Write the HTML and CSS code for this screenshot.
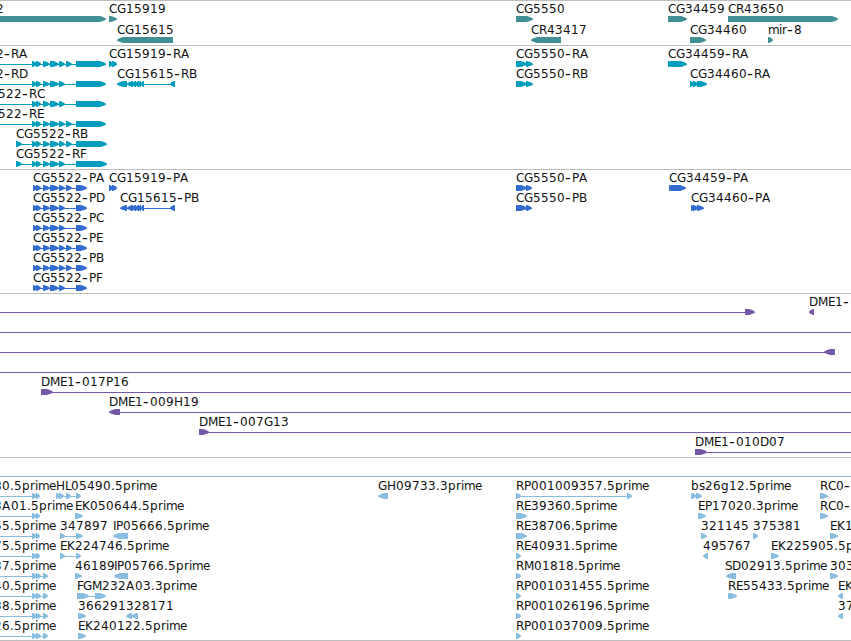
FILE: index.html
```
<!DOCTYPE html>
<html lang="en">
<head>
    <meta charset="UTF-8">
    <meta name="viewport" content="width=device-width, initial-scale=1.0">
    <title>Genome Browser</title>
    <link rel="stylesheet" href="styles.css">
</head>
<body>
    <div class="browser">
        <svg class="track genes" id="genes"></svg>
        <svg class="track transcripts" id="transcripts"></svg>
        <svg class="track proteins" id="proteins"></svg>
        <svg class="track bacs" id="bacs"></svg>
        <svg class="track ests" id="ests"></svg>
    </div>
    <script src="tracks.js"></script>
</body>
</html>
```
FILE: styles.css
```
html, body {
    margin: 0;
    padding: 0;
    background: white;
    overflow: hidden;
}
.browser {
    display: flex;
    flex-direction: column;
    width: 851px;
    height: 641px;
    box-sizing: border-box;
    border-bottom: 1px solid #bebebe;
    overflow: hidden;
}
.track {
    display: block;
    box-sizing: border-box;
    width: 851px;
    flex: none;
    border-top: 1px solid #bebebe;
    overflow: hidden;
}
.track text {
    font-family: "DejaVu Sans", sans-serif;
    font-size: 12px;
    fill: #111;
}
.track .dash {
    font-size: 16px;
}
.track rect {
    shape-rendering: crispEdges;
}
.genes {
    height: 45px;
    fill: #408f94;
}
.transcripts {
    height: 124px;
    fill: #009dbd;
}
.proteins {
    height: 124px;
    fill: #326ccf;
}
.bacs {
    height: 164px;
    fill: #7658a9;
}
.ests {
    height: 183px;
    fill: #88bddf;
}
```
FILE: tracks.js
```
// horizontal advance of each label character, in pixels
const advance = {
    A: 9, C: 8, D: 9, E: 7, F: 6, G: 9, H: 9, I: 3, K: 8, L: 6, M: 10, P: 7, R: 8, S: 7,
    b: 8, e: 8, g: 8, i: 3, m: 11, p: 8, r: 5, s: 6, "-": 7, ".": 4
};

const utr = [[32, 37], [36, 41], [43, 50], [50, 59], [59, 65]];
const cds = [[33, 37], [36, 41], [43, 50], [50, 59], [59, 65]];
const extra = [[66, 72]];
const est2 = [[-9, -4], [32, 37], [36, 40]];
const est3 = [[-9, -4], [32, 37], [36, 41], [43, 48]];

// feature: [label, label x, exons, strand]
const tracks = {
    genes: { first: 18, step: 21, rows: [
        [["2", -4, [[-20, 106]]], ["CG15919", 109, [[109, 117]]], ["CG5550", 516, [[516, 533]]],
         ["CG34459", 668, [[668, 687]]], ["CR43650", 728, [[728, 838]]]],
        [["CG15615", 117, [[117, 173]], -1], ["CR43417", 531, [[531, 561]], -1],
         ["CG34460", 690, [[690, 706]]], ["mir-8", 768, [[768, 773]]]]
    ]},
    transcripts: { first: 18, step: 20, rows: [
        [["2-RA", -4, [[-9, -4], ...utr, ...extra, [76, 106]]], ["CG15919-RA", 109, [[109, 113], [112, 117]]],
         ["CG5550-RA", 516, [[516, 527], [526, 533]]], ["CG34459-RA", 668, [[668, 671], [670, 687]]]],
        [["2-RD", -4, [[-9, -4], ...utr, [76, 106]]],
         ["CG15615-RB", 117, [[117, 127], [127, 133], [132, 136], [135, 139], [138, 141], [141, 144], [170, 175]], -1],
         ["CG5550-RB", 516, [[516, 527], [526, 533]]], ["CG34460-RA", 690, [[690, 694], [693, 698], [697, 707]]]],
        [["522-RC", -2, [[-9, -4], ...utr, [76, 106]]]],
        [["522-RE", -2, [[-9, -4], ...utr, ...extra, [76, 106]]]],
        [["CG5522-RB", 16, [[16, 22], ...utr, ...extra, [76, 107]]]],
        [["CG5522-RF", 16, [[16, 22], ...utr, [76, 107]]]]
    ]},
    proteins: { first: 18, step: 20, rows: [
        [["CG5522-PA", 33, [...cds, ...extra, [76, 87]]], ["CG15919-PA", 109, [[109, 113], [112, 117]]],
         ["CG5550-PA", 516, [[516, 527], [526, 532]]], ["CG34459-PA", 669, [[669, 672], [671, 686]]]],
        [["CG5522-PD", 33, [...cds, [76, 87]]],
         ["CG15615-PB", 120, [[120, 127], [127, 133], [132, 136], [135, 139], [138, 141], [141, 144], [170, 175]], -1],
         ["CG5550-PB", 516, [[516, 527], [526, 532]]], ["CG34460-PA", 691, [[691, 694], [693, 698], [697, 704]]]],
        [["CG5522-PC", 33, [...cds, [76, 87]]]],
        [["CG5522-PE", 33, [...cds, ...extra, [76, 87]]]],
        [["CG5522-PB", 33, [...cds, ...extra, [76, 87]]]],
        [["CG5522-PF", 33, [...cds, [76, 87]]]]
    ]},
    bacs: { first: 18, step: 20, rows: [
        [["", 0, [[-20, -10], [745, 755]]], ["DME1-", 809, [[809, 814]], -1]],
        [["", 0, [[-20, -10], [870, 880]]]],
        [["", 0, [[-20, -10], [824, 835]], -1]],
        [["", 0, [[-20, -10], [870, 880]]]],
        [["DME1-017P16", 41, [[41, 53], [870, 880]]]],
        [["DME1-009H19", 109, [[109, 120], [870, 880]], -1]],
        [["DME1-007G13", 199, [[199, 209], [870, 880]]]],
        [["DME1-010D07", 695, [[695, 707], [870, 880]]]]
    ]},
    ests: { first: 18, step: 20, rows: [
        [["", 0, [[-20, -10], [870, 880]]]],
        [["80.5prime", -6, est2], ["HL05490.5prime", 56, [[56, 60], [59, 64], [66, 71], [76, 81]]],
         ["GH09733.3prime", 378, [[378, 388]], -1], ["RP001009357.5prime", 516, [[516, 521], [627, 632]]],
         ["bs26g12.5prime", 691, [[691, 697], [696, 702]]], ["RC0-", 820, [[820, 828]]]],
        [["3A01.5prime", -6, est2], ["EK050644.5prime", 75, [[75, 83]]], ["RE39360.5prime", 516, [[516, 527]]],
         ["EP17020.3prime", 698, [[698, 706]]], ["RC0-", 820, [[820, 828]]]],
        [["55.5prime", -6, est2], ["347897", 60, [[60, 65], [76, 83]]], ["IP05666.5prime", 113, [[113, 128]], -1],
         ["RE38706.5prime", 516, [[516, 527]]], ["321145", 701, [[701, 707]]], ["375381", 753, [[753, 758]]],
         ["EK1", 830, [[830, 838]]]],
        [["75.5prime", -6, est2], ["EK224746.5prime", 60, [[60, 65], [76, 81]]], ["RE40931.5prime", 516, [[516, 521]]],
         ["495767", 703, [[703, 708]], -1], ["EK225905.5p", 771, [[771, 779]]]],
        [["37.5prime", -6, est3], ["46189", 75, [[75, 82]]], ["IP05766.5prime", 114, [[114, 128]], -1],
         ["RM01818.5prime", 516, [[516, 521]]], ["SD02913.5prime", 725, [[726, 736]], -1], ["303", 830, [[830, 838]]]],
        [["40.5prime", -6, est3], ["FGM232A03.3prime", 77, [[77, 89], [95, 106]]], ["RP001031455.5prime", 516, [[516, 521]]],
         ["RE55433.5prime", 728, [[728, 737]]], ["EK", 838, [[838, 843]], -1]],
        [["38.5prime", -6, est3], ["366291", 78, [[78, 86]]], ["328171", 126, [[126, 132], [131, 138]], -1],
         ["RP001026196.5prime", 516, [[516, 521]]], ["37", 838, [[838, 843]], -1]],
        [["26.5prime", -6, est3], ["EK240122.5prime", 78, [[78, 86]]], ["RP001037009.5prime", 516, [[516, 521]]]]
    ]}
};

function drawLabel(label, x, y) {
    let spans = "";
    for (const ch of label) {
        if (ch === "-") {
            spans += `<tspan class="dash" x="${x}" y="${y + 1}">-</tspan>`;
        } else {
            spans += `<tspan x="${x}" y="${y}">${ch}</tspan>`;
        }
        x += advance[ch] || 8;
    }
    return `<text>${spans}</text>`;
}

function drawExon(start, end, y, strand) {
    const head = Math.min(6, end - start - 1);
    const top = y - 3, bottom = y + 3;
    // d points from the tip back into the body
    const tip = strand < 0 ? start : end;
    const tail = strand < 0 ? end : start;
    const d = strand < 0 ? 1 : -1;
    const neck = tip + d * head, bend = tip + d * head * 0.4;
    return `<polygon points="${tail},${top} ${neck},${top} ${bend},${y - 1.8} ${tip},${y - 0.3} ${tip},${y + 0.7} ${bend},${y + 1.8} ${neck},${bottom} ${tail},${bottom}"/>`;
}

for (const id in tracks) {
    const track = tracks[id];
    let svg = "";
    track.rows.forEach((row, i) => {
        const y = track.first + i * track.step;
        for (const [label, x, exons, strand = 1] of row) {
            const start = exons[0][0], end = exons[exons.length - 1][1];
            if (exons.length > 1) {
                svg += `<rect x="${start + 1}" y="${y}" width="${end - start - 2}" height="1"/>`;
            }
            svg += exons.map(([a, b]) => drawExon(a, b, y, strand)).join("");
            if (label) svg += drawLabel(label, x, y - 6);
        }
    });
    document.getElementById(id).innerHTML = svg;
}
```
